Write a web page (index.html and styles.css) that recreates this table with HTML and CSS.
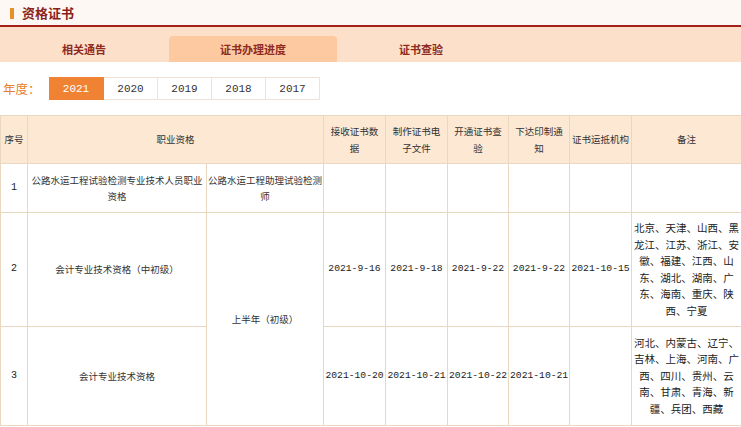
FILE: index.html
```html
<!DOCTYPE html>
<html lang="zh-CN">
<head>
<meta charset="utf-8">
<title>资格证书</title>
<link rel="stylesheet" href="styles.css">
</head>
<body>
<div class="title-bar">
  <span class="title-mark"></span>
  <span class="title-text">资格证书</span>
</div>
<div class="tabs">
  <div class="tab">相关通告</div>
  <div class="tab active">证书办理进度</div>
  <div class="tab">证书查验</div>
</div>
<div class="years">
  <span class="years-label">年度：</span>
  <div class="year-list">
    <span class="year current">2021</span>
    <span class="year">2020</span>
    <span class="year">2019</span>
    <span class="year">2018</span>
    <span class="year">2017</span>
  </div>
</div>
<table class="progress">
  <colgroup>
    <col class="c-no"><col class="c-q1"><col class="c-q2"><col class="c-d"><col class="c-d"><col class="c-d2"><col class="c-d2"><col class="c-d"><col class="c-note">
  </colgroup>
  <thead>
    <tr class="r-head">
      <th>序号</th>
      <th colspan="2">职业资格</th>
      <th>接收证书数<br>据</th>
      <th>制作证书电<br>子文件</th>
      <th>开通证书查<br>验</th>
      <th>下达印制通<br>知</th>
      <th>证书运抵机构</th>
      <th>备注</th>
    </tr>
  </thead>
  <tbody>
    <tr class="r-1">
      <td class="num">1</td>
      <td>公路水运工程试验检测专业技术人员职业<br>资格</td>
      <td>公路水运工程助理试验检测<br>师</td>
      <td></td><td></td><td></td><td></td><td></td><td></td>
    </tr>
    <tr class="r-2">
      <td class="num">2</td>
      <td>会计专业技术资格（中初级）</td>
      <td rowspan="2">上半年（初级）</td>
      <td class="date">2021-9-16</td>
      <td class="date">2021-9-18</td>
      <td class="date">2021-9-22</td>
      <td class="date">2021-9-22</td>
      <td class="date">2021-10-15</td>
      <td class="note">北京、天津、山西、黑<br>龙江、江苏、浙江、安<br>徽、福建、江西、山<br>东、湖北、湖南、广<br>东、海南、重庆、陕<br>西、宁夏</td>
    </tr>
    <tr class="r-3">
      <td class="num">3</td>
      <td>会计专业技术资格</td>
      <td class="date">2021-10-20</td>
      <td class="date">2021-10-21</td>
      <td class="date">2021-10-22</td>
      <td class="date">2021-10-21</td>
      <td></td>
      <td class="note">河北、内蒙古、辽宁、<br>吉林、上海、河南、广<br>西、四川、贵州、云<br>南、甘肃、青海、新<br>疆、兵团、西藏</td>
    </tr>
  </tbody>
</table>
</body>
</html>
```

FILE: styles.css
```css
html, body {
  margin: 0;
  padding: 0;
  background: #ffffff;
}
body {
  font-family: "Noto Sans CJK SC", "Noto Sans", sans-serif;
  color: #333;
  width: 741px;
  overflow: hidden;
}
.title-bar {
  height: 25px;
  background: #fdf8f3;
  border-bottom: 2px solid #a3201c;
  display: flex;
  align-items: center;
  padding-left: 10px;
  box-sizing: content-box;
}
.title-mark {
  width: 4px;
  height: 11px;
  background: #e8902a;
  margin-right: 8px;
  margin-top: 1px;
}
.title-text {
  font-size: 13px;
  font-weight: bold;
  color: #8b1f1a;
  line-height: 25px;
}
.tabs {
  height: 35px;
  background: #fde0c9;
  display: flex;
}
.tab {
  width: 168px;
  margin-top: 9px;
  height: 26px;
  line-height: 27px;
  text-align: center;
  font-size: 11px;
  font-weight: bold;
  color: #8e2b1e;
  border-radius: 4px 4px 0 0;
}
.tab.active {
  margin-left: 1px;
  background: #fdc9a1;
}
.years {
  display: flex;
  align-items: center;
  margin-top: 15px;
  height: 23px;
}
.years-label {
  width: 49px;
  padding-left: 3px;
  box-sizing: border-box;
  font-size: 12.5px;
  color: #e8802c;
}
.year-list {
  display: flex;
}
.year {
  width: 54px;
  height: 23px;
  line-height: 23px;
  text-align: center;
  font-family: "Liberation Mono", monospace;
  font-size: 11px;
  color: #333;
  border: 1px solid #efe3d7;
  border-left: none;
  box-sizing: border-box;
}
.year.current {
  width: 55px;
  background: #f08233;
  border-color: #f08233;
  color: #fff;
}
.progress {
  margin-top: 15px;
  width: 741px;
  border-collapse: collapse;
  table-layout: fixed;
  font-size: 9.5px;
  line-height: 16.5px;
}
.c-no { width: 27px; }
.c-q1 { width: 179px; }
.c-q2 { width: 117px; }
.c-d { width: 62px; }
.c-d2 { width: 61px; }
.c-note { width: 110px; }
.progress th,
.progress td {
  border: 1px solid #e9d8bf;
  padding: 0 1px;
  text-align: center;
  vertical-align: middle;
  font-weight: normal;
  color: #333;
  white-space: nowrap;
}
.progress th {
  background: #fce8d3;
}
.r-head th { height: 47px; }
.r-1 td { height: 48px; }
.r-2 td { height: 113px; }
.r-3 td { height: 98px; }
.progress .num,
.progress .date {
  font-family: "Liberation Mono", monospace;
  font-size: 9.7px;
  color: #222;
}
.progress .num {
  font-size: 10px;
}
.progress .note {
  font-size: 10.5px;
  padding: 0;
  color: #222;
}
```
